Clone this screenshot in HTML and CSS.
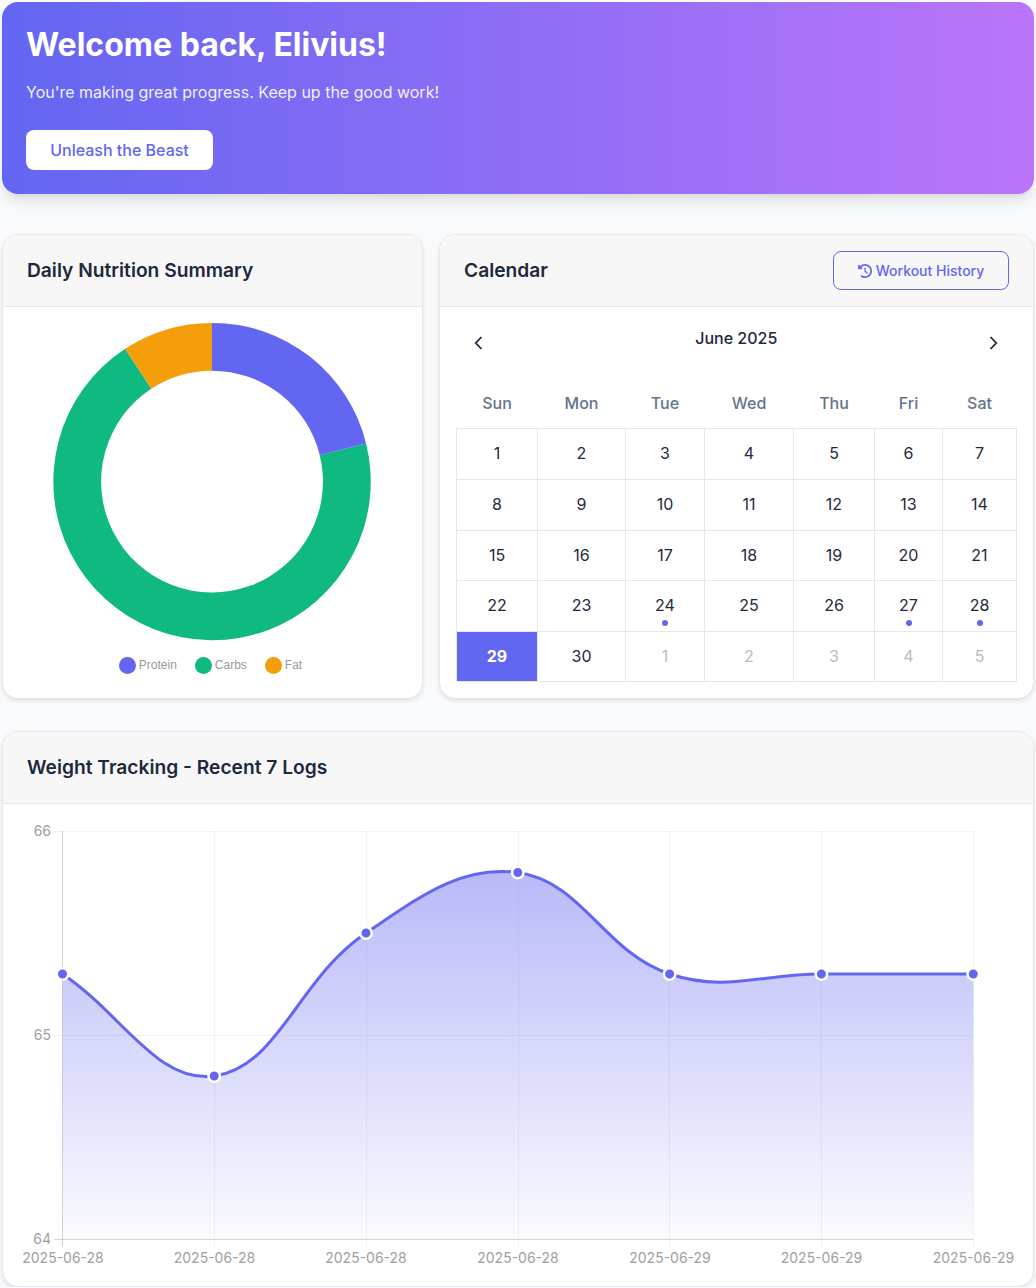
FILE: index.html
```html
<!DOCTYPE html>
<html lang="en">
<head>
    <meta charset="UTF-8">
    <meta name="viewport" content="width=device-width, initial-scale=1.0">
    <title>Dashboard</title>
    <link rel="stylesheet" href="styles.css">
</head>
<body>
    <section class="hero">
        <h1>Welcome back, Elivius!</h1>
        <p>You're making great progress. Keep up the good work!</p>
        <button class="hero-btn" type="button">Unleash the Beast</button>
    </section>

    <div class="row">
        <div class="card">
            <div class="card-header">
                <h2>Daily Nutrition Summary</h2>
            </div>
            <div class="nutrition-body">
                <svg class="donut" viewBox="53 322.7 318 318" width="318" height="318">
                    <path fill="#10b981" d="M366.1 443.2A158.7 158.7 0 1 1 125.1 348.5L151.3 388.5A110.9 110.9 0 1 0 319.7 454.7Z"/>
                    <path fill="#f59e0b" d="M125.1 348.5A158.7 158.7 0 0 1 212 322.6V370.4A110.9 110.9 0 0 0 151.3 388.5Z"/>
                    <path fill="#6366f1" d="M212 322.6A158.7 158.7 0 0 1 366.1 443.2L319.7 454.7A110.9 110.9 0 0 0 212 370.4Z"/>
                </svg>
                <div class="legend">
                    <span class="legend-item"><i class="swatch swatch-protein"></i>Protein</span>
                    <span class="legend-item"><i class="swatch swatch-carbs"></i>Carbs</span>
                    <span class="legend-item"><i class="swatch swatch-fat"></i>Fat</span>
                </div>
            </div>
        </div>

        <div class="card">
            <div class="card-header">
                <h2>Calendar</h2>
                <button class="history-btn" type="button">
                    <svg class="history-icon" viewBox="0 0 512 512" width="14" height="14"><path fill="currentColor" d="M75 75L41 41C25.9 25.9 0 36.6 0 57.9V168c0 13.3 10.7 24 24 24H134.1c21.4 0 32.1-25.9 17-41l-30.8-30.8C155 85.5 203 64 256 64c106 0 192 86 192 192s-86 192-192 192c-40.8 0-78.6-12.7-109.7-34.4c-14.5-10.1-34.4-6.6-44.6 7.9s-6.6 34.4 7.9 44.6C151.2 495 201.7 512 256 512c141.4 0 256-114.6 256-256S397.4 0 256 0C185.3 0 121.3 28.7 75 75zm181 53c-13.3 0-24 10.7-24 24V256c0 6.4 2.5 12.5 7 17l72 72c9.4 9.4 24.6 9.4 33.9 0s9.4-24.6 0-33.9l-65-65V152c0-13.3-10.7-24-24-24z"/></svg>
                    Workout History
                </button>
            </div>
            <div class="calendar-body">
                <div class="month-nav">
                    <button class="nav-btn" type="button">
                        <svg viewBox="0 0 16 16" width="16" height="16"><path d="M10.5 2L4.8 8l5.7 6" fill="none" stroke="currentColor" stroke-width="1.8"/></svg>
                    </button>
                    <span class="month-label">June 2025</span>
                    <button class="nav-btn" type="button">
                        <svg viewBox="0 0 16 16" width="16" height="16"><path d="M5.5 2l5.7 6-5.7 6" fill="none" stroke="currentColor" stroke-width="1.8"/></svg>
                    </button>
                </div>
                <table class="calendar">
                    <colgroup>
                        <col class="col-sun"><col class="col-mon"><col class="col-tue"><col class="col-wed"><col class="col-thu"><col class="col-fri"><col class="col-sat">
                    </colgroup>
                    <thead>
                        <tr><th>Sun</th><th>Mon</th><th>Tue</th><th>Wed</th><th>Thu</th><th>Fri</th><th>Sat</th></tr>
                    </thead>
                    <tbody>
                        <tr><td>1</td><td>2</td><td>3</td><td>4</td><td>5</td><td>6</td><td>7</td></tr>
                        <tr><td>8</td><td>9</td><td>10</td><td>11</td><td>12</td><td>13</td><td>14</td></tr>
                        <tr class="row-short"><td>15</td><td>16</td><td>17</td><td>18</td><td>19</td><td>20</td><td>21</td></tr>
                        <tr><td>22</td><td>23</td><td class="has-log">24</td><td>25</td><td>26</td><td class="has-log">27</td><td class="has-log">28</td></tr>
                        <tr class="row-short"><td class="today">29</td><td>30</td><td class="other">1</td><td class="other">2</td><td class="other">3</td><td class="other">4</td><td class="other">5</td></tr>
                    </tbody>
                </table>
            </div>
        </div>
    </div>

    <div class="card weight-card">
        <div class="card-header">
            <h2>Weight Tracking - Recent 7 Logs</h2>
        </div>
        <svg class="weight-chart" viewBox="3 804 1030 482" width="1030" height="482">
            <defs>
                <linearGradient id="weight-fill" x1="0" y1="831" x2="0" y2="1239" gradientUnits="userSpaceOnUse">
                    <stop offset="0" stop-color="#6366f1" stop-opacity="0.5"/>
                    <stop offset="1" stop-color="#6366f1" stop-opacity="0.03"/>
                </linearGradient>
            </defs>

            <path class="grid" d="M54 831.5H973.5M54 1035.5H973.5"/>
            <path class="grid" d="M214.5 831V1247M366.5 831V1247M518.5 831V1247M669.5 831V1247M821.5 831V1247M973.5 831V1247"/>
            <path class="axis" d="M54 1239.5H973.5M62.5 831V1247"/>

            <path fill="url(#weight-fill)" d="M62.5 974C123.1 1014.8 157.3 1083.7 214.2 1076C278.7 1067.3 297.8 978.6 366 933C419.4 897.2 460.6 864.8 517.8 872.5C582.2 881.2 603.6 951.8 669.6 974C725.2 992.4 761.2 974 821.4 974C882.6 974 912.9 974 973.3 974V1239H62.5Z"/>
            <path class="weight-line" d="M62.5 974C123.1 1014.8 157.3 1083.7 214.2 1076C278.7 1067.3 297.8 978.6 366 933C419.4 897.2 460.6 864.8 517.8 872.5C582.2 881.2 603.6 951.8 669.6 974C725.2 992.4 761.2 974 821.4 974C882.6 974 912.9 974 973.3 974"/>

            <circle class="point" cx="62.5" cy="974" r="5.75"/>
            <circle class="point" cx="214.2" cy="1076" r="5.75"/>
            <circle class="point" cx="366" cy="933" r="5.75"/>
            <circle class="point" cx="517.8" cy="872.5" r="5.75"/>
            <circle class="point" cx="669.6" cy="974" r="5.75"/>
            <circle class="point" cx="821.4" cy="974" r="5.75"/>
            <circle class="point" cx="973.3" cy="974" r="5.75"/>

            <text class="tick" x="51" y="836" text-anchor="end">66</text>
            <text class="tick" x="51" y="1040" text-anchor="end">65</text>
            <text class="tick" x="51" y="1244" text-anchor="end">64</text>

            <text class="tick" x="63" y="1263" text-anchor="middle">2025-06-28</text>
            <text class="tick" x="214.5" y="1263" text-anchor="middle">2025-06-28</text>
            <text class="tick" x="366" y="1263" text-anchor="middle">2025-06-28</text>
            <text class="tick" x="518" y="1263" text-anchor="middle">2025-06-28</text>
            <text class="tick" x="670" y="1263" text-anchor="middle">2025-06-29</text>
            <text class="tick" x="821.5" y="1263" text-anchor="middle">2025-06-29</text>
            <text class="tick" x="973.5" y="1263" text-anchor="middle">2025-06-29</text>
        </svg>
    </div>
</body>
</html>
```

FILE: styles.css
```css
* {
    box-sizing: border-box;
}

body {
    font-family: 'Inter', 'Liberation Sans', sans-serif;
    margin: 0;
    padding: 2px 2px 0;
    background: #f8fafc;
    color: #1e293b;
}

.hero {
    height: 192px;
    padding: 24px;
    margin-bottom: 40px;
    border-radius: 16px;
    background: linear-gradient(90deg, #6366f1, #ba75f9);
    box-shadow: 0 10px 15px -3px rgba(0, 0, 0, 0.1), 0 4px 6px -2px rgba(0, 0, 0, 0.05);
    color: #fff;
}

.hero h1 {
    margin: 0 0 16px;
    font-size: 32px;
    line-height: 38.4px;
    font-weight: 700;
}

.hero p {
    margin: 0 0 25.6px;
    font-size: 16px;
    line-height: 24px;
    opacity: 0.9;
}

.hero-btn {
    width: 187px;
    height: 40px;
    border: none;
    border-radius: 8px;
    background: #fff;
    color: #6366f1;
    font-family: inherit;
    font-size: 16px;
    font-weight: 500;
}

.row {
    display: grid;
    grid-template-columns: 421px 1fr;
    gap: 16px;
    margin-bottom: 32px;
}

.card {
    background: #fff;
    border: 1px solid #e2e8f0;
    border-radius: 16px;
    box-shadow: 0 2px 4px rgba(0, 0, 0, 0.1);
    overflow: hidden;
}

.card-header {
    display: flex;
    align-items: center;
    justify-content: space-between;
    height: 72px;
    padding: 0 24px;
    background: #f7f7f8;
    border-bottom: 1px solid #e2e8f0;
}

.card-header h2 {
    margin: 0 0 2px;
    font-size: 19.2px;
    font-weight: 600;
}

/* nutrition card */
.nutrition-body {
    padding: 16px 16px 0;
    height: 391px;
}

.donut {
    display: block;
    margin-left: 34px;
    overflow: visible;
}

.legend {
    display: flex;
    justify-content: center;
    gap: 18px;
    margin-top: 15px;
    padding-right: 4px;
    font-family: 'Liberation Sans', sans-serif;
    font-size: 12px;
    color: #999;
}

.legend-item {
    display: flex;
    align-items: center;
    gap: 3px;
}

.swatch {
    width: 17px;
    height: 17px;
    margin-top: 1px;
    border-radius: 50%;
}

.swatch-protein { background: #6366f1; }
.swatch-carbs { background: #10b981; }
.swatch-fat { background: #f59e0b; }

/* calendar card */
.history-btn {
    display: flex;
    align-items: center;
    justify-content: center;
    gap: 4px;
    width: 176px;
    height: 39px;
    border: 1px solid #6366f1;
    border-radius: 8px;
    background: transparent;
    color: #6366f1;
    font-family: inherit;
    font-size: 14px;
    font-weight: 500;
}

.calendar-body {
    padding: 16px 16px 0;
}

.month-nav {
    display: flex;
    justify-content: space-between;
    align-items: flex-start;
    height: 56px;
    padding: 0 8.5px 0 7px;
}

.month-label {
    margin-left: 1px;
    font-size: 16px;
    font-weight: 500;
    line-height: 30px;
}

.nav-btn {
    width: 32px;
    height: 40px;
    padding: 0;
    border: none;
    background: none;
    color: #1e293b;
    display: flex;
    align-items: center;
    justify-content: center;
}

.calendar {
    width: 560px;
    table-layout: fixed;
    border-collapse: collapse;
    font-size: 16px;
}

.col-sun { width: 81px; }
.col-mon { width: 88px; }
.col-tue { width: 79px; }
.col-wed { width: 89px; }
.col-thu { width: 81px; }
.col-fri { width: 68px; }
.col-sat { width: 74px; }

.calendar th {
    height: 49px;
    font-weight: 500;
    color: #64748b;
    text-align: center;
    padding: 0;
}

.calendar td {
    position: relative;
    height: 51px;
    padding: 0 0 1px;
    text-align: center;
    border: 1px solid #e2e8f0;
}

.calendar .row-short td {
    height: 50px;
    padding: 0;
}

.calendar td.today {
    background: #6366f1;
    color: #fff;
    font-weight: 700;
}

.calendar td.other {
    color: #b8bcc6;
}

.calendar td.has-log::after {
    content: "";
    position: absolute;
    left: 50%;
    bottom: 5px;
    width: 6px;
    height: 6px;
    margin-left: -3px;
    border-radius: 50%;
    background: #6366f1;
}

/* weight chart */
.weight-card {
    height: 556px;
}

.weight-chart {
    display: block;
}

.grid {
    fill: none;
    stroke: rgba(0, 0, 0, 0.05);
    stroke-width: 1;
}

.axis {
    fill: none;
    stroke: rgba(0, 0, 0, 0.16);
    stroke-width: 1;
}

.weight-line {
    fill: none;
    stroke: #6366f1;
    stroke-width: 3;
}

.point {
    fill: #6366f1;
    stroke: #fff;
    stroke-width: 2.5;
}

.tick {
    font-family: 'Inter', sans-serif;
    font-size: 14px;
    fill: #a0a0a0;
}
```
